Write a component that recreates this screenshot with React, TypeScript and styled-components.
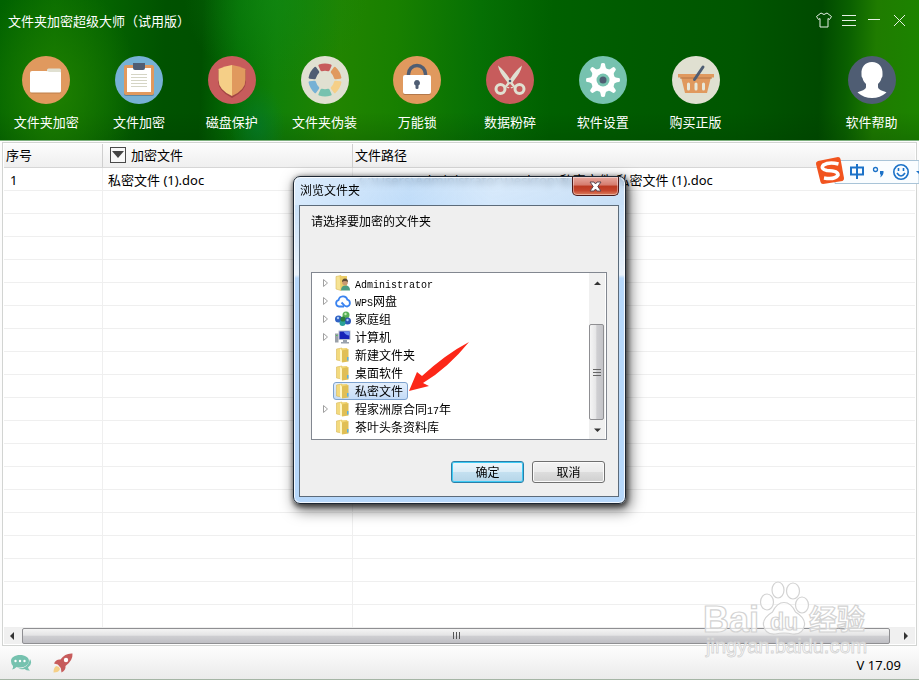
import React from "react";
import styled, { createGlobalStyle, css } from "styled-components";

const Global = createGlobalStyle`
  *, *::before, *::after { box-sizing: border-box; }
  body {
    margin: 0;
    font: 13px/18px "Noto Sans", "Noto Sans CJK SC", sans-serif;
    color: #000;
  }
  button { font: inherit; color: inherit; padding: 0; margin: 0; border: 0; background: none; }
  svg { display: block; }
`;

const Window = styled.div`
  position: relative;
  display: flex;
  flex-direction: column;
  min-height: 100vh;
  overflow: hidden;
  background: #fcfcfc;
`;

/* ---------- header ---------- */

const Header = styled.header`
  color: #fff;
  padding-bottom: 9px;
  border-bottom: 1px solid #7db07d;
  background:
    radial-gradient(ellipse 9% 80% at 6% 65%, rgba(36, 132, 0, 0.8), transparent),
    radial-gradient(ellipse 10% 60% at 30% 0%, rgba(16, 136, 20, 0.6), transparent),
    radial-gradient(ellipse 3% 30% at 28% 90%, rgba(0, 120, 60, 0.5), transparent),
    linear-gradient(180deg, transparent 80%, rgba(0, 50, 0, 0.2)),
    linear-gradient(
      92deg,
      #006200 0%,
      #086c00 6%,
      #046200 12%,
      #005200 18%,
      #005000 22%,
      #057005 26%,
      #108008 30%,
      #218400 37%,
      #188000 43%,
      #067004 52%,
      #006000 60%,
      #005a00 70%,
      #005600 80%,
      #004a00 89%,
      #0a6000 92%,
      #1f7c00 95%,
      #1c8400 100%
    );
`;

const TitleBar = styled.div`
  display: flex;
  align-items: center;
  justify-content: space-between;
  height: 44px;
  padding: 0 11px 0 8px;
`;

const AppTitle = styled.h1`
  margin: 0;
  padding-bottom: 2px;
  font-size: 13px;
  font-weight: 400;
`;

const WindowControls = styled.div`
  display: flex;
  gap: 7px;
  padding-bottom: 4px;
`;

const WindowButton = styled.button`
  width: 18px;
  height: 18px;
`;

const Toolbar = styled.nav`
  display: flex;
  padding-top: 12px;
`;

const ToolGroup = styled.div`
  flex: 1;
  display: grid;
  grid-template-columns: repeat(8, 1fr);
  margin-right: 82px;
`;

const ToolButton = styled.button`
  display: flex;
  flex-direction: column;
  align-items: center;
  gap: 9px;
  white-space: nowrap;
`;

const HelpButton = styled(ToolButton)`
  width: 95px;
`;

/* ---------- file table ---------- */

const TableFrame = styled.main`
  flex: 1;
  display: flex;
  flex-direction: column;
  margin: 1px 2px 0;
  padding: 1px;
  border: 1px solid #d2d4d2;
  background: #fff;
`;

const FileTable = styled.table`
  width: 100%;
  table-layout: fixed;
  border-collapse: separate;
  border-spacing: 0;
`;

const NumberCol = styled.col`
  width: 99px;
`;
const NameCol = styled.col`
  width: 250px;
`;

const HeadCell = styled.th`
  height: 24px;
  padding: 0 2px 2px;
  font-weight: 400;
  text-align: left;
  background: linear-gradient(#fcfcfc, #efefef);
  border-bottom: 1px solid #d6d6d6;
  &:not(:last-child) { border-right: 1px solid #cfcfcf; }
`;

const Cell = styled.td`
  height: 23px;
  padding: 1px 6px 0;
  white-space: nowrap;
  border-bottom: 1px solid #efefef;
  &:not(:last-child) { border-right: 1px solid #efefef; }
  &:nth-child(2) { padding-left: 5px; }
`;

const HeadContent = styled.div`
  display: flex;
  align-items: center;
  gap: 5px;
  padding-left: 5px;
`;

const FilterButton = styled.button`
  display: grid;
  place-items: center;
  width: 16px;
  height: 16px;
  border: 1px solid #4a4a4a;
  background: #f8f8f8;
`;

const HScroll = styled.div`
  display: flex;
  height: 16px;
  background: #f0f0f0;
`;

const HScrollArrow = styled.button<{ $wide?: boolean }>`
  display: grid;
  place-items: center;
  width: ${(p) => (p.$wide ? 25 : 18)}px;
  padding-right: ${(p) => (p.$wide ? 0 : 2)}px;
  padding-left: ${(p) => (p.$wide ? 6 : 0)}px;
`;

const HThumb = styled.div`
  flex: 1;
  display: grid;
  place-items: center;
  border: 1px solid #8f8f92;
  border-radius: 2px;
  background: linear-gradient(#f4f4f4 0%, #e4e4e5 45%, #cfcfd2 50%, #bfbfc4 100%);
`;

/* ---------- footer ---------- */

const Footer = styled.footer`
  display: flex;
  align-items: center;
  gap: 20px;
  height: 34px;
  padding: 0 18px 0 10px;
  background: linear-gradient(#fdfdfd, #ebebeb);
  border-bottom: 1px solid #a5b5a5;
`;

const Version = styled.span`
  margin-left: auto;
  padding-top: 4px;
`;

/* ---------- input method bar ---------- */

const ImeBar = styled.aside`
  position: absolute;
  top: 156px;
  right: 0;
  display: flex;
  width: 104px;
  height: 32px;
  overflow: hidden;
`;

/* ---------- dialog ---------- */

const Overlay = styled.div`
  position: absolute;
  inset: 0;
  display: grid;
  place-items: center;
`;

const Dialog = styled.section`
  width: 333px;
  padding: 0 6px 6px 5px;
  border: 1px solid #1d2733;
  border-radius: 7px;
  background:
    linear-gradient(100deg, rgba(225, 240, 255, 0.6) 0%, rgba(160, 205, 250, 0.25) 35%, rgba(225, 240, 255, 0.4) 60%, rgba(190, 215, 240, 0.3) 100%) top / 100% 28px no-repeat,
    linear-gradient(rgba(180, 212, 243, 0.55) 0%, rgba(196, 222, 248, 0.9) 9%, rgba(232, 241, 250, 0.96) 30%, #b7d8fb 31%, #b7d8fb 100%);
  backdrop-filter: blur(3px);
  box-shadow:
    inset 0 0 0 1px rgba(255, 255, 255, 0.8),
    1px 2px 5px 1px rgba(0, 0, 0, 0.6),
    3px 5px 14px 2px rgba(0, 0, 0, 0.5);
  font: 12px/18px "Noto Sans CJK SC", sans-serif;
`;

const DialogTitleBar = styled.div`
  display: flex;
  align-items: flex-start;
  justify-content: space-between;
  height: 28px;
`;

const DialogTitle = styled.h2`
  margin: 0;
  padding: 4px 1px;
  font-size: 12px;
  font-weight: 400;
`;

const CloseButton = styled.button`
  display: grid;
  place-items: center;
  width: 47px;
  height: 19px;
  border: 1px solid #4c1a1a;
  border-top: 0;
  border-radius: 0 0 5px 5px;
  background: linear-gradient(#e7aaa0 0%, #d57b6d 45%, #bb3a22 50%, #c5442c 75%, #dc8060 100%);
  box-shadow: inset 0 0 0 1px rgba(255, 255, 255, 0.4);
`;

const DialogBody = styled.div`
  padding: 6px 11px 13px;
  border: 1px solid #5c6b7a;
  background: #efefef;
`;

const Prompt = styled.p`
  margin: 0 0 42px;
`;

const TreeBox = styled.div`
  display: flex;
  height: 168px;
  padding-right: 1px;
  border: 1px solid #828790;
  background: #fff;
`;

const Tree = styled.ul`
  flex: 1;
  margin: 0;
  padding: 1px 0 0;
  list-style: none;
`;

const TreeItem = styled.li`
  display: flex;
  align-items: center;
  height: 18px;
`;

const Toggle = styled.span`
  display: grid;
  place-items: center;
  width: 21px;
  padding-left: 6px;
`;

const TreeLabel = styled.span<{ $selected?: boolean }>`
  display: flex;
  align-items: center;
  gap: 4px;
  height: 18px;
  padding: 0 4px 0 1px;
  border: 1px solid transparent;
  border-radius: 3px;
  white-space: nowrap;
  ${(p) =>
    p.$selected &&
    css`
      border-color: #7da2ce;
      background: linear-gradient(#e3eefb, #c4dcf8);
    `}
`;

const Latin = styled.span`
  font: 10px/1 "Liberation Mono", monospace;
`;

const VScroll = styled.div`
  display: flex;
  flex-direction: column;
  width: 16px;
  background: #f0f0f0;
`;

const VScrollArrow = styled.button`
  display: grid;
  place-items: center;
  height: 19px;
`;

const VThumb = styled.div`
  display: grid;
  place-items: center;
  height: 96px;
  margin-top: auto;
  margin-right: 1px;
  border: 1px solid #8f8f92;
  border-radius: 2px;
  background: linear-gradient(90deg, #f5f5f5 0%, #e6e6e7 45%, #cfcfd2 52%, #c4c4c8 100%);
`;

const Actions = styled.div`
  display: flex;
  justify-content: flex-end;
  gap: 8px;
  padding: 21px 2px 0 0;
`;

const DialogButton = styled.button<{ $primary?: boolean }>`
  width: 73px;
  height: 22px;
  border-radius: 3px;
  border: 1px solid ${(p) => (p.$primary ? "#2c7fa8" : "#707070")};
  background: ${(p) =>
    p.$primary
      ? "linear-gradient(#eef7fc 0%, #dcedf7 48%, #c4e0f0 52%, #b5d5e8 100%)"
      : "linear-gradient(#f3f3f3 0%, #ebebeb 48%, #dddddd 52%, #cfcfcf 100%)"};
  box-shadow: inset 0 0 0 1px ${(p) => (p.$primary ? "#3ecbf5" : "#fbfbfb")};
  line-height: 18px;
`;

const Pointer = styled.svg`
  position: absolute;
  top: 165px;
  left: 115px;
  pointer-events: none;
`;

const DialogAnchor = styled.div`
  position: relative;
`;

const Watermark = styled.svg`
  position: absolute;
  right: 44px;
  bottom: 18px;
  pointer-events: none;
`;

/* ---------- drawings ---------- */

const Disc = ({ color, children }: { color: string; children: React.ReactNode }) => (
  <svg width="48" height="48" viewBox="0 0 48 48" aria-hidden="true">
    <circle cx="24" cy="24" r="24" fill={color} />
    {children}
  </svg>
);

const FolderDisc = () => (
  <Disc color="#e0995e">
    <path d="M25 20v-6q0-1.500 1.500-1.500h11q1.500 0 1.500 1.500v6z" fill="#e0e0d1" />
    <path d="M8.500 18v18.500q0 1 1.500 1h27.500q1.500 0 1.500-1V18z" fill="#a86f40" opacity=".6" />
    <path d="M8 17q0-2 2-2h14q2 0 3 1h11q1 0 1 1v18q0 1.500-1.500 1.500h-28Q8 36.500 8 35z" fill="#fff" />
  </Disc>
);

const ClipboardDisc = () => (
  <Disc color="#76b1d5">
    <rect x="9" y="10" width="30" height="30" rx="2" fill="#5a87a5" />
    <rect x="9" y="9" width="30" height="30" rx="2" fill="#e0995e" />
    <path d="M12 12h24v24H12z" fill="#fff" />
    <path d="M18 7h12v5q0 2-2 2h-8q-2 0-2-2z" fill="#4f5d73" />
    <path d="M16 18.500h16M16 21.500h16M16 24.500h16M16 27.500h16M16 30.500h16" stroke="#d5d5c5" />
  </Disc>
);

const ShieldDisc = () => (
  <Disc color="#c75c5c">
    <path d="M24 9q7 1 14 4v11q0 10-14 17Q10 34 10 24V13q7-3 14-4z" fill="#a24444" transform="translate(0 1)" />
    <path d="M24 9q7 1 13.500 4v11q0 10-13.500 16z" fill="#e0995e" />
    <path d="M24 9q-7 1-13.500 4v11q0 10 13.500 16z" fill="#f5cf87" />
  </Disc>
);

const segments = ["#c75c5c", "#e0995e", "#f5cf87", "#76c2af", "#76b1d5", "#4f5d73"];

const WheelDisc = () => (
  <Disc color="#e0e0d1">
    {segments.map((fill, i) => (
      <path
        key={fill}
        d="M18 8.500Q24 6.500 30 8.500q1 .5.500 1.500l-2 4.500q-.5 1-1.500.7-3-.8-6 0-1 .3-1.500-.7l-2-4.500q-.5-1 .5-1.500z"
        fill={fill}
        transform={`rotate(${i * 60} 24 24)`}
      />
    ))}
  </Disc>
);

const LockDisc = () => (
  <Disc color="#e0995e">
    <path d="M15.500 21v-3a8.500 8.500 0 0 1 17 0v3" fill="none" stroke="#4f5d73" strokeWidth="3.500" />
    <rect x="10" y="20" width="28" height="19" rx="2" fill="#b3784a" />
    <rect x="10" y="19" width="28" height="19" rx="2" fill="#fff" />
    <path d="M24 24a3 3 0 0 1 1.500 5.600V32q0 1-1.500 1t-1.500-1v-2.400A3 3 0 0 1 24 24z" fill="#4f5d73" />
  </Disc>
);

const ScissorsDisc = () => (
  <Disc color="#c75c5c">
    <g fill="#e0e0d1">
      <path d="M12 9.500Q18 14 23.500 22.500l6 8-4 2-5.500-8Q13 16 12 9.500z" />
      <path d="M36 9.500Q30 14 24.500 22.500l-6 8 4 2 5.500-8Q35 16 36 9.500z" />
    </g>
    <path d="M21 31h6l-3-3.500z" fill="#c75c5c" />
    <g fill="none" stroke="#e0e0d1" strokeWidth="3">
      <circle cx="14.500" cy="33" r="4.500" />
      <circle cx="33.500" cy="33" r="4.500" />
    </g>
    <circle cx="24" cy="25" r="1.300" fill="#4f5d73" />
  </Disc>
);

const GearDisc = () => (
  <Disc color="#76c2af">
    {[0, 45, 90, 135, 180, 225, 270, 315].map((a) => (
      <path key={a} d="M19.500 14q2-1.500 2.500-6 .2-1 2-1t2 1q.5 4.500 2.500 6z" fill="#fff" transform={`rotate(${a} 24 24)`} />
    ))}
    <circle cx="24" cy="24" r="12" fill="#fff" />
    <circle cx="24" cy="24" r="6.500" fill="#76c2af" />
    <circle cx="24" cy="24" r="3.500" fill="#4f5d73" />
  </Disc>
);

const BasketDisc = () => (
  <Disc color="#e0e0d1">
    <path d="M9 21h30l-4 16H13z" fill="#e0995e" />
    <path d="M6 18h36v3.500H6z" fill="#e0995e" />
    <path d="M8 22h32" stroke="#b67544" />
    <path d="M16.500 28v5M24 28v5M31.500 28v5" stroke="#e8e8da" strokeWidth="3" strokeLinecap="round" />
    <path d="m31 11-8.500 12.500" stroke="#4f5d73" strokeWidth="3" strokeLinecap="round" />
  </Disc>
);

const PersonDisc = () => (
  <Disc color="#4f5d73">
    <path
      d="M24 6c7 0 11 5 10.500 12 0 2 0 3-1 4-.6 3-2 4.500-3.500 6v3c0 3 5 3.500 8.500 5.500Q32 42 24 42T9.500 36.500C13 34.500 18 34 18 31v-3c-1.500-1.500-2.900-3-3.500-6-1-1-1-2-1-4C13 11 17 6 24 6z"
      fill="#fff"
    />
  </Disc>
);

const tools = [
  { label: "文件夹加密", icon: <FolderDisc /> },
  { label: "文件加密", icon: <ClipboardDisc /> },
  { label: "磁盘保护", icon: <ShieldDisc /> },
  { label: "文件夹伪装", icon: <WheelDisc /> },
  { label: "万能锁", icon: <LockDisc /> },
  { label: "数据粉碎", icon: <ScissorsDisc /> },
  { label: "软件设置", icon: <GearDisc /> },
  { label: "购买正版", icon: <BasketDisc /> },
];

const controls = [
  { label: "皮肤", d: "M6 2 1.500 5.500l2 3 1.500-1V16h8V7.500l1.500 1 2-3L12 2q-3 3-6 0z" },
  { label: "菜单", d: "M2 4.500h14M2 9.500h14M2 14.500h14" },
  { label: "最小化", d: "M3 8.500h12" },
  { label: "关闭", d: "m4 4 11 11M15 4 4 15" },
];

const Triangle = ({ d, size = 8 }: { d: string; size?: number }) => (
  <svg width={size} height={size} viewBox="0 0 8 8" aria-hidden="true">
    <path d={d} fill="#333" />
  </svg>
);

const FolderIcon = () => (
  <svg width="16" height="16" viewBox="0 0 16 16" aria-hidden="true">
    <path d="M1.500 2 7 1v13l-5.500-1z" fill="#f3da7e" stroke="#d9b957" strokeWidth=".6" />
    <path d="M5 1.500 11.500 1q1 0 1 1v9L7 14.500z" fill="#f0d472" />
    <path d="M7 3.500 13.500 2v12.500L7 15.500z" fill="#e0bf55" />
    <path d="M5 1.500V14l2 1.500v-12z" fill="#fff6c4" />
    <path d="M12 10h1.500v3.500H12z" fill="#5ab0e6" />
  </svg>
);

const UserFolderIcon = () => (
  <svg width="16" height="16" viewBox="0 0 16 16" aria-hidden="true">
    <path d="M1 1.500 6 .5v15l-5-1.500z" fill="#f6e394" stroke="#d9b957" strokeWidth=".6" />
    <path d="M4.500 1h7.500v11l-6 3z" fill="#eccd68" />
    <path d="M6 15.500q0-5 4.500-5t4.500 5z" fill="#4c9d83" />
    <circle cx="10" cy="7.500" r="2.800" fill="#c99a72" />
    <path d="M7 7q0-3.500 3-3.500t3 3.500q-3-2-6 0z" fill="#5c4a35" />
  </svg>
);

const CloudIcon = () => (
  <svg width="16" height="16" viewBox="0 0 16 16" aria-hidden="true">
    <path
      d="M9 13.500H4a3.200 3.200 0 0 1-.4-6.300 4.500 4.500 0 0 1 8.800-.5 3.500 3.500 0 0 1-.4 6.800q-2 0-3.500-2L6.500 9.500"
      fill="none"
      stroke="#3a83f0"
      strokeWidth="1.800"
      strokeLinejoin="round"
    />
  </svg>
);

const HomegroupIcon = () => (
  <svg width="16" height="16" viewBox="0 0 16 16" aria-hidden="true">
    <circle cx="3.500" cy="8" r="3.500" fill="#2f62c4" />
    <circle cx="11" cy="4" r="3.500" fill="#58b158" />
    <circle cx="12.500" cy="10" r="3.500" fill="#2d57b8" />
    <circle cx="7.500" cy="12" r="3" fill="#2aa198" />
    <circle cx="8" cy="8" r="2.600" fill="#2c7d3c" />
    <circle cx="10.500" cy="3" r="1.200" fill="#c4ecb8" />
    <circle cx="3" cy="7" r="1.200" fill="#a9c8f5" />
    <circle cx="12.500" cy="9" r="1.200" fill="#a9c8f5" />
  </svg>
);

const ComputerIcon = () => (
  <svg width="16" height="16" viewBox="0 0 16 16" aria-hidden="true">
    <path d="M0 4.500h3.500v9H0z" fill="#9aa0a8" />
    <path d="M1 6h1.500v1H1z" fill="#52c452" />
    <path d="M3.500 1.500h12v9.500h-12z" fill="#b9c1cc" />
    <path d="M4.500 2.500h10v7.500h-10z" fill="#1723b8" />
    <path d="M8.500 2.500h6v4q-4 0-6-4z" fill="#6a8cf2" />
    <path d="M8 11h4v2h2v1.500H6V13h2z" fill="#99a2ad" />
  </svg>
);

const tree = [
  { latin: "Administrator", text: "", icon: <UserFolderIcon />, open: true },
  { latin: "WPS", text: "网盘", icon: <CloudIcon />, open: true },
  { text: "家庭组", icon: <HomegroupIcon />, open: true },
  { text: "计算机", icon: <ComputerIcon />, open: true },
  { text: "新建文件夹", icon: <FolderIcon /> },
  { text: "桌面软件", icon: <FolderIcon /> },
  { text: "私密文件", icon: <FolderIcon />, selected: true },
  { text: "程家洲原合同", latinAfter: "17", tail: "年", icon: <FolderIcon />, open: true },
  { text: "茶叶头条资料库", icon: <FolderIcon /> },
];

const files = [
  { name: "私密文件 (1).doc", path: "C:\\Users\\Administrator\\Desktop\\私密文件\\私密文件 (1).doc" },
];
const ROWS = 20;

function BrowseDialog() {
  return (
    <Overlay>
      <DialogAnchor>
        <Dialog role="dialog" aria-labelledby="browse-title">
          <DialogTitleBar>
            <DialogTitle id="browse-title">浏览文件夹</DialogTitle>
            <CloseButton aria-label="关闭">
              <svg width="13" height="11" viewBox="0 0 13 11" aria-hidden="true">
                <path d="M1 1h4l1.500 2L8 1h4L8.800 5.500 12 10H8L6.500 8 5 10H1l3.200-4.500z" fill="#fff" stroke="#5d4650" />
              </svg>
            </CloseButton>
          </DialogTitleBar>
          <DialogBody>
            <Prompt>请选择要加密的文件夹</Prompt>
            <TreeBox>
              <Tree role="tree" aria-label="文件夹">
                {tree.map((n) => (
                  <TreeItem key={n.text} role="treeitem" aria-selected={!!n.selected}>
                    <Toggle>
                      {n.open && (
                        <svg width="7" height="10" viewBox="0 0 7 10" aria-hidden="true">
                          <path d="M1.500 1.500v7L5.500 5z" fill="#fff" stroke="#a0a0a0" />
                        </svg>
                      )}
                    </Toggle>
                    <TreeLabel $selected={n.selected}>
                      {n.icon}
                      <span>
                        {n.latin && <Latin>{n.latin}</Latin>}
                        {n.text}
                        {n.latinAfter && <Latin>{n.latinAfter}</Latin>}
                        {n.tail}
                      </span>
                    </TreeLabel>
                  </TreeItem>
                ))}
              </Tree>
              <VScroll>
                <VScrollArrow aria-label="向上滚动">
                  <Triangle d="M1 6h7L4.500 2.500z" />
                </VScrollArrow>
                <VThumb>
                  <svg width="8" height="9" viewBox="0 0 8 9" aria-hidden="true">
                    <path d="M0 1.500h8M0 4.500h8M0 7.500h8" stroke="#666" />
                  </svg>
                </VThumb>
                <VScrollArrow aria-label="向下滚动">
                  <Triangle d="M1 2.500h7L4.500 6z" />
                </VScrollArrow>
              </VScroll>
            </TreeBox>
            <Actions>
              <DialogButton $primary>确定</DialogButton>
              <DialogButton>取消</DialogButton>
            </Actions>
          </DialogBody>
        </Dialog>
        <Pointer width="62" height="52" viewBox="0 0 62 52" aria-hidden="true">
          <path d="M61 1Q38 13 14 35L9 31 1 50l20-5-6-3Q40 27 61 1z" fill="#fc2718" />
        </Pointer>
      </DialogAnchor>
    </Overlay>
  );
}

export default function App() {
  return (
    <>
      <Global />
      <Window>
        <Header>
          <TitleBar>
            <AppTitle>文件夹加密超级大师（试用版）</AppTitle>
            <WindowControls>
              {controls.map((c) => (
                <WindowButton key={c.label} aria-label={c.label}>
                  <svg width="18" height="18" viewBox="0 0 18 18" fill="none" stroke="#e6f0e6">
                    <path d={c.d} />
                  </svg>
                </WindowButton>
              ))}
            </WindowControls>
          </TitleBar>
          <Toolbar>
            <ToolGroup>
              {tools.map((t) => (
                <ToolButton key={t.label}>
                  {t.icon}
                  <span>{t.label}</span>
                </ToolButton>
              ))}
            </ToolGroup>
            <HelpButton>
              <PersonDisc />
              <span>软件帮助</span>
            </HelpButton>
          </Toolbar>
        </Header>

        <TableFrame>
          <FileTable>
            <colgroup>
              <NumberCol />
              <NameCol />
              <col />
            </colgroup>
            <thead>
              <tr>
                <HeadCell>序号</HeadCell>
                <HeadCell>
                  <HeadContent>
                    <FilterButton aria-label="筛选">
                      <svg width="12" height="7" viewBox="0 0 12 7" aria-hidden="true">
                        <path d="M0 0h12L6 7z" fill="#444" />
                      </svg>
                    </FilterButton>
                    加密文件
                  </HeadContent>
                </HeadCell>
                <HeadCell>文件路径</HeadCell>
              </tr>
            </thead>
            <tbody>
              {Array.from({ length: ROWS }, (_, i) => (
                <tr key={i}>
                  <Cell>{files[i] && i + 1}</Cell>
                  <Cell>{files[i]?.name}</Cell>
                  <Cell>{files[i]?.path}</Cell>
                </tr>
              ))}
            </tbody>
          </FileTable>
          <HScroll>
            <HScrollArrow aria-label="向左滚动">
              <Triangle d="M6 0v8L2 4z" />
            </HScrollArrow>
            <HThumb>
              <svg width="9" height="8" viewBox="0 0 9 8" aria-hidden="true">
                <path d="M1.500 0v7M4.500 0v7M7.500 0v7" stroke="#555" />
              </svg>
            </HThumb>
            <HScrollArrow $wide aria-label="向右滚动">
              <Triangle d="M2 0v8l4-4z" />
            </HScrollArrow>
          </HScroll>
        </TableFrame>

        <Footer>
          <button aria-label="消息">
            <svg width="22" height="18" viewBox="0 0 22 18" aria-hidden="true">
              <path d="M20 5q3 5-2 8.500.5 2 2 3-3 .5-5.500-1.500-4 .8-6-.5 10 0 11.500-9.500z" fill="#76c2af" />
              <path d="M10 1c5 0 9 2.500 9 6s-4 6.500-9 6.500q-2 0-3.500-.5-2 2-4.500 2.500 1.500-2 1-3.500Q1 10 1 7c0-3.500 4-6 9-6z" fill="#76c2af" />
              <g fill="#fff">
                <circle cx="5.500" cy="7" r="1.200" />
                <circle cx="10" cy="7" r="1.200" />
                <circle cx="14.500" cy="7" r="1.200" />
              </g>
            </svg>
          </button>
          <button aria-label="加速">
            <svg width="22" height="22" viewBox="0 0 22 22" aria-hidden="true">
              <path d="M20.500 1.500q.5 7-7 12.500.5 4-4 6.500l-.7-4.500-3-3.500L2 11.500Q4 7 8.500 7.500 13 1 20.500 1.500z" fill="#c75c5c" />
              <circle cx="14" cy="8" r="2.200" fill="#fff" />
              <path d="M4.500 14q3 .5 3.500 3-1 3.500-6.500 3.500Q1.500 15 4.500 14z" fill="#f5cf87" />
            </svg>
          </button>
          <Version>V 17.09</Version>
        </Footer>

        <ImeBar aria-label="输入法">
          <svg width="104" height="32" viewBox="0 0 104 32" aria-hidden="true">
            <path d="M20 4.500h84v23H20z" fill="#fafdff" stroke="#a9c4d8" />
            <path d="m3 5 20-4q2 0 2.500 2L29 22q.3 2-1.500 3L8 28q-2 0-2.500-2L1 8q-.5-2 2-3z" fill="#f1541f" />
            <path
              d="M23.500 8Q14 5.500 8.500 9 5 13 12 14.500q11 0 11 4.500-3 5-14 3"
              fill="none"
              stroke="#fff"
              strokeWidth="3.600"
            />
            <path d="M36 11.500h12v7H36zM42 8v15" fill="none" stroke="#1c72c8" strokeWidth="2" />
            <circle cx="60.500" cy="13.500" r="2" fill="none" stroke="#1c72c8" strokeWidth="1.300" />
            <path d="M65 15h3.500q.5 4-3.500 6.500 1.500-2.500 0-3.500z" fill="#1c72c8" />
            <circle cx="86" cy="16" r="7.200" fill="none" stroke="#1c72c8" strokeWidth="1.600" />
            <path d="M82 17q4 6 8 0M83.500 12v3M88.500 12v3" fill="none" stroke="#1c72c8" strokeWidth="1.600" />
            <path d="M101 15h3v3z" fill="#1c72c8" />
          </svg>
        </ImeBar>

        <Watermark width="172" height="82" viewBox="0 0 172 82" aria-label="Baidu经验">
          <g fill="#fff" fillOpacity=".7" stroke="#d3d3d3" strokeWidth="1.200">
            <ellipse cx="64" cy="22" rx="6.500" ry="8" />
            <ellipse cx="75" cy="10" rx="6" ry="8" />
            <ellipse cx="90" cy="11" rx="6.500" ry="8" />
            <ellipse cx="99" cy="25" rx="6.500" ry="8" />
            <path d="M81 22.500q7 0 11.500 9.500 10 6 9 13-1.500 10-12 9-8.500-2-17 0-10.500 1-12-9-1-7 9-13 4.500-9.500 11.500-9.500z" />
            <text x="0" y="52" fontFamily="Liberation Sans, sans-serif" fontWeight="700" fontSize="36">Bai</text>
            <text x="67" y="50" fontFamily="Liberation Sans, sans-serif" fontWeight="700" fontSize="23">du</text>
            <text x="106" y="50" fontFamily="Noto Sans CJK SC, sans-serif" fontWeight="700" fontSize="28">经验</text>
            <text x="3" y="73" fontFamily="Liberation Sans, sans-serif" fontSize="20" strokeWidth=".8">jingyan.baidu.com</text>
          </g>
        </Watermark>

        <BrowseDialog />
      </Window>
    </>
  );
}
